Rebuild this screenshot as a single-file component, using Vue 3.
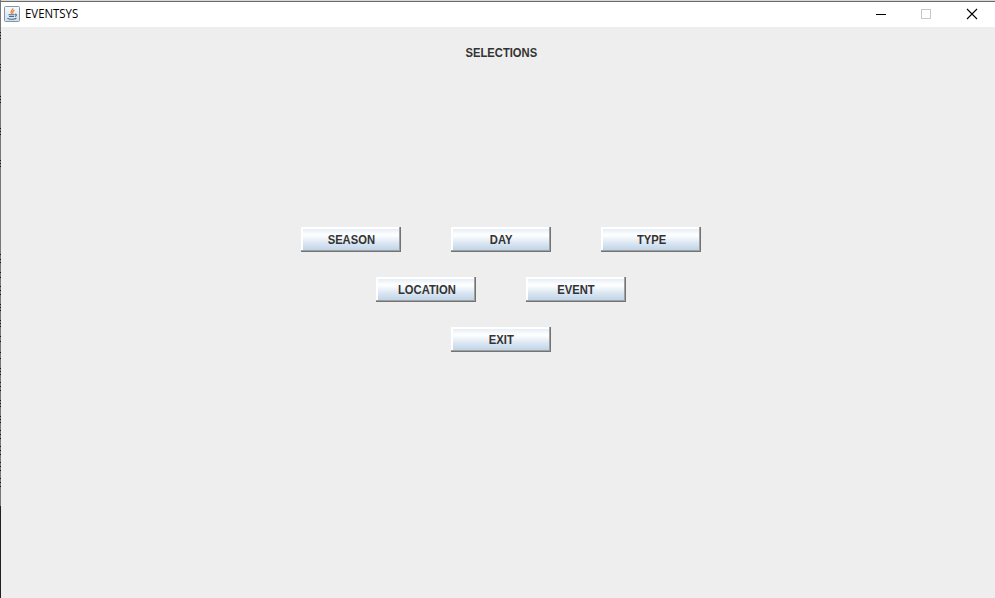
<script setup>
const rows = [['SEASON', 'DAY', 'TYPE'], ['LOCATION', 'EVENT'], ['EXIT']]
const marks = [32, 35, 38, 64, 67, 70, 96, 99, 102, 128, 131, 134, 160, 163, 166, 254, 259, 262, 272, 277, 286, 290, 294, 304, 307, 310, 320, 323, 326, 336, 341, 352, 358, 368, 371, 374, 382, 386, 390, 400, 403, 406, 416, 419, 422, 430, 434, 438, 446, 450, 454, 462, 466, 470, 478, 482, 486]
</script>

<template>
  <div class="window">
    <svg class="edge" width="1" height="598" viewBox="0 0 1 598" shape-rendering="crispEdges">
      <rect width="1" height="598" fill="#777" />
      <rect v-for="y in marks" :key="y" :y="y" width="1" height="1" fill="#161616" />
      <rect y="506" width="1" height="92" fill="#202020" />
    </svg>
    <div class="frame">
      <header class="titlebar">
        <svg class="java" width="16" height="16" viewBox="0 0 16 16" fill="none">
          <defs>
            <linearGradient id="tile" x1="0" y1="0" x2="0" y2="1">
              <stop offset="0" stop-color="#f8fafc" />
              <stop offset="1" stop-color="#d3dce5" />
            </linearGradient>
          </defs>
          <rect x=".5" y=".5" width="15" height="15" rx="1" fill="url(#tile)" stroke="#8297aa" />
          <path d="M8.7 2.2C9.5 4 5.4 4.5 7.6 8M10.5 4C8.4 5 8.2 5.8 9 7.8" stroke="#ef853a" stroke-width="1.2" />
          <path d="M4.5 8.7H10.5M5 10.5H10M11 8.4c2-.5 1.8 1.4 0 2M3.4 12.4c2 1.2 7 1.1 9-.2" stroke="#416b95" stroke-width="1.1" />
        </svg>
        <span class="title">EVENTSYS</span>
        <svg class="controls" width="138" height="25" viewBox="0 0 138 25" fill="none" shape-rendering="crispEdges">
          <path d="M19 12.5h10" stroke="#000" />
          <rect x="64.5" y="7.5" width="9" height="9" stroke="#c8c8c8" />
          <path d="M110 7l10 10M120 7l-10 10" stroke="#000" stroke-width="1.1" shape-rendering="auto" />
        </svg>
      </header>
      <main class="content">
        <h1><span class="label">SELECTIONS</span></h1>
        <div v-for="(row, i) in rows" :key="i" class="row">
          <button v-for="name in row" :key="name"><span class="label">{{ name }}</span></button>
        </div>
      </main>
    </div>
  </div>
</template>

<style>
body { margin: 0; overflow: hidden; }
</style>
<style scoped>
.window { display: flex; width: 995px; height: 598px; background: #eee; }
.edge { flex: none; display: block; }
.frame { flex: 1; box-sizing: border-box; border-top: 1px solid #d8d8d8; }
.titlebar { display: flex; height: 26px; box-sizing: border-box; border-top: 1px solid #6c6c6c; background: #fff; }
.java { margin: 4px 0 0 3px; }
.title { margin-left: 5px; font: 12px/24px "Open Sans", sans-serif; color: #000; transform: scaleX(.95); transform-origin: left; }
.controls { margin-left: auto; }
.content { display: flex; flex-direction: column; }
h1 { margin: 19px 0 166px; padding-left: 7px; height: 15px; font: bold 12px/15px "Liberation Sans", Arial, sans-serif; text-align: center; color: #333; }
.label { display: inline-block; transform: scaleX(.935); }
.row { display: flex; justify-content: center; gap: 50px; margin-bottom: 25px; padding-left: 6px; }
button { box-sizing: border-box; width: 100px; height: 25px; margin: 0; padding: 2px 0 0 1px; border: 0; font: bold 12px/23px "Liberation Sans", Arial, sans-serif; color: #333; text-align: center; background: linear-gradient(#dde8f3 0, #fff 32%, #dde8f3 62%, #b8cfe5 100%); box-shadow: inset -1px -1px #737373, inset -2px -2px #a0a0a0, inset 2px 2px #fff; }
</style>
